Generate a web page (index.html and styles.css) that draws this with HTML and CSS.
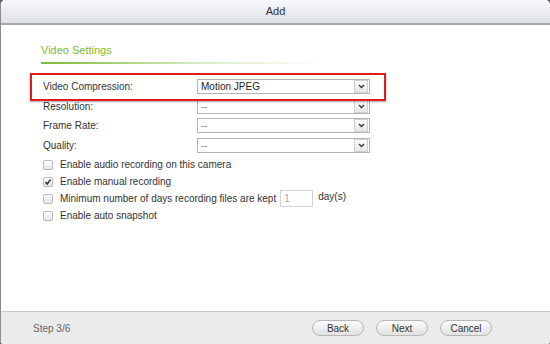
FILE: index.html
```html
<!DOCTYPE html>
<html lang="en">
<head>
    <meta charset="UTF-8">
    <title>Add</title>
    <link rel="stylesheet" href="styles.css">
</head>
<body>
    <div class="window">
        <div class="titlebar">Add</div>

        <div class="content">
            <h2 class="section-title">Video Settings</h2>

            <!-- select rows -->
            <div class="fields">
                <div class="field highlight">
                    <label>Video Compression:</label>
                    <div class="select">
                        <span class="value">Motion JPEG</span>
                        <span class="arrow"><svg width="7" height="5" viewBox="0 0 7 5"><polyline points="1,1 3.5,3.5 6,1" fill="none" stroke="#333" stroke-width="1.3"/></svg></span>
                    </div>
                </div>
                <div class="field">
                    <label>Resolution:</label>
                    <div class="select">
                        <span class="value empty">--</span>
                        <span class="arrow"><svg width="7" height="5" viewBox="0 0 7 5"><polyline points="1,1 3.5,3.5 6,1" fill="none" stroke="#333" stroke-width="1.3"/></svg></span>
                    </div>
                </div>
                <div class="field">
                    <label>Frame Rate:</label>
                    <div class="select">
                        <span class="value empty">--</span>
                        <span class="arrow"><svg width="7" height="5" viewBox="0 0 7 5"><polyline points="1,1 3.5,3.5 6,1" fill="none" stroke="#333" stroke-width="1.3"/></svg></span>
                    </div>
                </div>
                <div class="field">
                    <label>Quality:</label>
                    <div class="select">
                        <span class="value empty">--</span>
                        <span class="arrow"><svg width="7" height="5" viewBox="0 0 7 5"><polyline points="1,1 3.5,3.5 6,1" fill="none" stroke="#333" stroke-width="1.3"/></svg></span>
                    </div>
                </div>
            </div>

            <!-- checkbox options -->
            <div class="options">
                <div class="option"><span class="check"></span>Enable audio recording on this camera</div>
                <div class="option"><span class="check checked"><svg width="8" height="8" viewBox="0 0 8 8"><polyline points="1.5,4 3.2,6 6.5,1.5" fill="none" stroke="#333" stroke-width="1.5"/></svg></span>Enable manual recording</div>
                <div class="option"><span class="check"></span>Minimum number of days recording files are kept <span class="days-input">1</span> <span class="days-unit">day(s)</span></div>
                <div class="option"><span class="check"></span>Enable auto snapshot</div>
            </div>
        </div>

        <div class="footer">
            <span class="step">Step 3/6</span>
            <div class="buttons">
                <button>Back</button>
                <button>Next</button>
                <button>Cancel</button>
            </div>
        </div>
    </div>
</body>
</html>
```

FILE: styles.css
```css
body {
    margin: 0;
    background-color: #5e5e5e;
    font-family: "Liberation Sans", Arial, sans-serif;
    font-size: 10px;
    color: #333;
}

.window {
    width: 549px;
    height: 344px;
    background-color: #fff;
    border-left: 1px solid #8c8c8c;
    border-radius: 5px 5px 3px 3px;
    display: flex;
    flex-direction: column;
    overflow: hidden;
}

/* title bar */
.titlebar {
    height: 23px;
    line-height: 23px;
    text-align: center;
    font-size: 11px;
    color: #333;
    background: linear-gradient(#f7f8fa, #dde1e6);
    border-bottom: 2px solid #a6aab0;
}

.content {
    flex-grow: 1;
    padding: 18px 0 0 40px;
}

.section-title {
    margin: 0;
    width: 280px;
    font-size: 11px;
    font-weight: normal;
    line-height: 14px;
    color: #7cbb33;
    padding-bottom: 7px;
    background: linear-gradient(to right, #7ab935, rgba(122, 185, 53, 0.3) 55%, rgba(122, 185, 53, 0)) no-repeat left bottom / 100% 2px;
}

.fields {
    margin-top: 13px;
    padding-left: 2px;
    width: 327px;
}

.field {
    display: flex;
    align-items: center;
    height: 19.5px;
}

.field label {
    width: 154px;
    flex-shrink: 0;
}

.highlight {
    position: relative;
}

.highlight::after {
    content: "";
    position: absolute;
    left: -13px;
    right: -16px;
    top: -4px;
    bottom: -4px;
    border: 2px solid #e21b1b;
    box-shadow: 0 1px 2px rgba(0, 0, 0, 0.35);
}

.select {
    flex-grow: 1;
    height: 13px;
    border: 1px solid #b4b4b4;
    display: flex;
    align-items: center;
    background-color: #fff;
}

.select .value {
    flex-grow: 1;
    padding-left: 3px;
    color: #222;
}

.select .value.empty {
    color: #888;
}

.arrow {
    width: 12px;
    height: 11px;
    margin-right: 1px;
    border: 1px solid #d0d0d0;
    background: linear-gradient(#fdfdfd, #e6e6e6);
    display: flex;
    align-items: center;
    justify-content: center;
}

/* checkbox options */
.options {
    margin-top: 1px;
    padding-left: 2px;
}

.option {
    display: flex;
    align-items: center;
    height: 17px;
}

.check {
    width: 8px;
    height: 8px;
    border: 1px solid #b9b9b9;
    border-radius: 2px;
    background: linear-gradient(#fdfdfd, #e4e4e4);
    margin-right: 7px;
    display: flex;
    align-items: center;
    justify-content: center;
}

.days-input {
    width: 28px;
    height: 15px;
    line-height: 15px;
    border: 1px solid #d2d2d2;
    color: #aaa;
    padding-left: 3px;
    margin: 0 5px 0 4px;
}

.days-unit {
    margin-top: -4px;
}

/* footer */
.footer {
    height: 32px;
    border-top: 1px solid #c9c9c9;
    background-color: #ebebeb;
    display: flex;
    align-items: center;
    justify-content: space-between;
    padding: 0 58px 0 32px;
}

.step {
    color: #666;
}

.buttons {
    display: flex;
    gap: 12px;
}

button {
    width: 52px;
    height: 16px;
    padding: 0;
    border: 1px solid #b8b8b8;
    border-radius: 8px;
    background: linear-gradient(#fafafa, #e2e2e2);
    font-family: "Liberation Sans", Arial, sans-serif;
    font-size: 10px;
    color: #333;
}
```
